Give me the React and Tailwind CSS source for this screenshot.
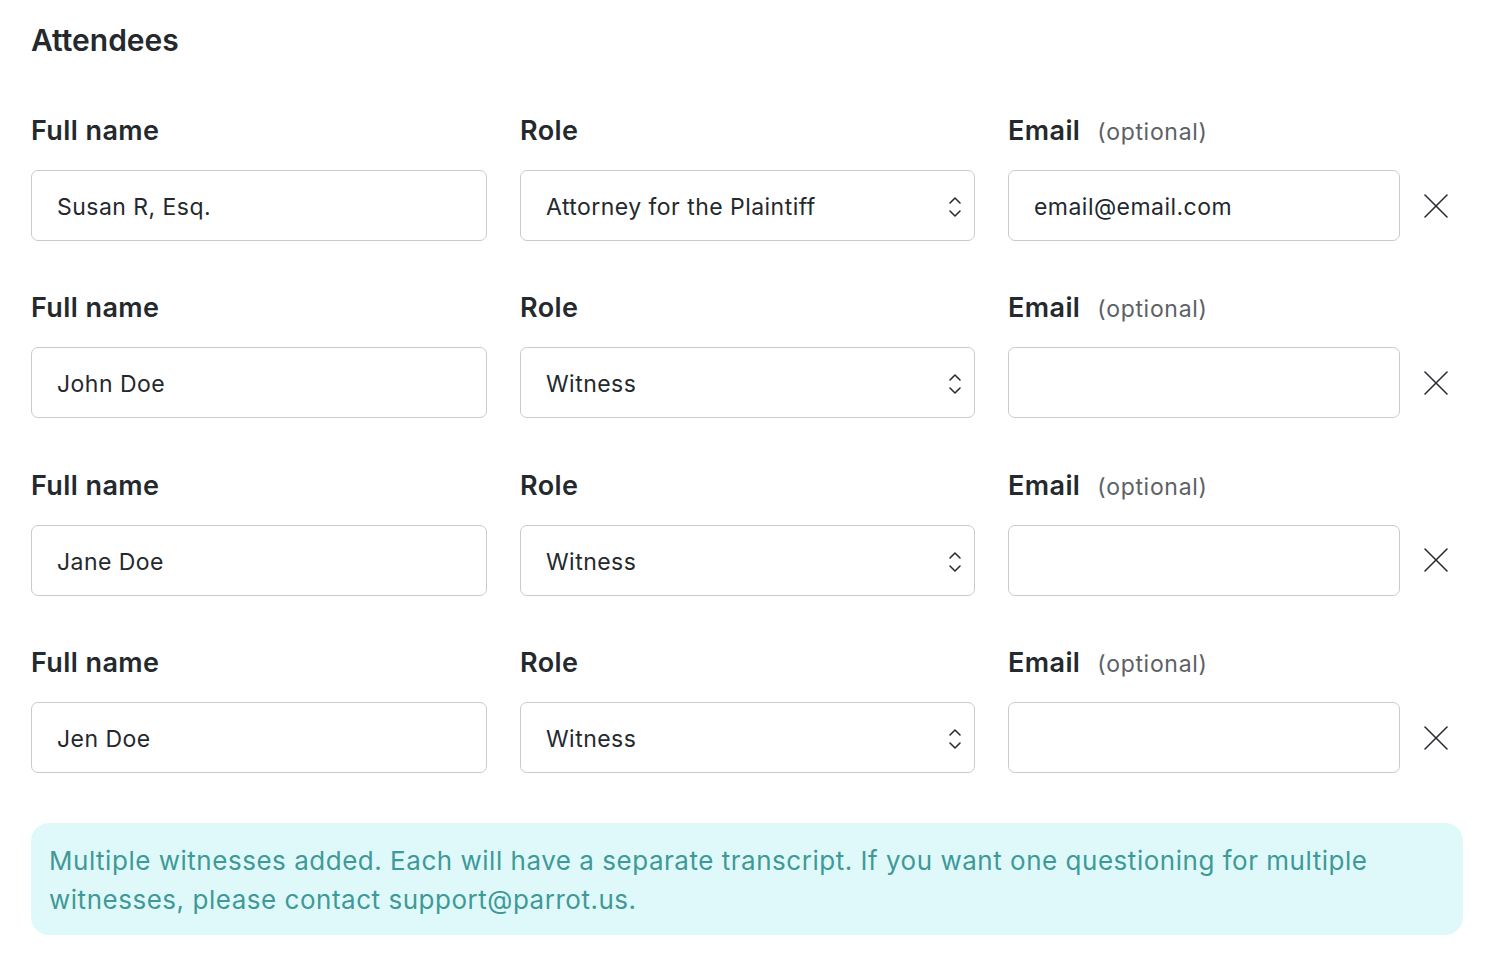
import React from 'react';

const attendees = [
    { name: 'Susan R, Esq.', role: 'Attorney for the Plaintiff', email: 'email@email.com' },
    { name: 'John Doe', role: 'Witness', email: '' },
    { name: 'Jane Doe', role: 'Witness', email: '' },
    { name: 'Jen Doe', role: 'Witness', email: '' },
];

function Chevrons() {
    return (
        <svg width="16" height="28" viewBox="0 0 16 28" fill="none" stroke="#2a2e33" strokeWidth="1.6" strokeLinecap="round" strokeLinejoin="round">
            <path d="M3 10 L8 5 L13 10" />
            <path d="M3 18 L8 23 L13 18" />
        </svg>
    );
}

function CloseIcon() {
    return (
        <svg width="28" height="28" viewBox="0 0 28 28" fill="none" stroke="#2a2e33" strokeWidth="1.6" strokeLinecap="round">
            <path d="M3 3 L25 25" />
            <path d="M25 3 L3 25" />
        </svg>
    );
}

const labelCls = 'text-[27px] leading-[32px] tracking-[0.015em] font-semibold text-[#24292e]';
const inputCls = 'mt-[23px] h-[71px] border border-[#c7cacf] rounded-[7px] flex items-center pt-[3px] text-[23px] tracking-[0.02em] text-[#24292e]';

function AttendeeRow({ attendee }) {
    return (
        <div className='flex items-end'>
            <div className='w-[456px]'>
                <div className={labelCls}>Full name</div>
                <div className={inputCls + ' px-[25px]'}>{attendee.name}</div>
            </div>
            <div className='w-[455px] ml-[33px]'>
                <div className={labelCls}>Role</div>
                <div className={inputCls + ' justify-between pl-[25px] pr-[11px]'}>
                    <span>{attendee.role}</span>
                    <Chevrons />
                </div>
            </div>
            <div className='w-[392px] ml-[33px]'>
                <div className='flex items-baseline h-[32px]'>
                    <span className={labelCls}>Email</span>
                    <span className='ml-[17px] text-[23px] leading-[32px] tracking-[0.03em] text-[#5d6166]'>(optional)</span>
                </div>
                <div className={inputCls + ' px-[25px]'}>{attendee.email}</div>
            </div>
            <div className='h-[71px] flex items-center ml-[22px]'>
                <CloseIcon />
            </div>
        </div>
    );
}

export default function App() {
    return (
        <div className='bg-white min-h-screen pt-[22px] pl-[31px] pr-[33px] font-["Inter","Noto_Sans",sans-serif]'>
            <h2 className='text-[30px] leading-[36px] font-semibold text-[#24292e]'>Attendees</h2>
            <div className='mt-[57px] flex flex-col gap-[51.4px]'>
                {attendees.map((a, i) => <AttendeeRow key={i} attendee={a} />)}
            </div>
            <div className='mt-[50px] bg-[#dff9fb] rounded-[18px] px-[18px] pt-[18px] pb-[16px] text-[26px] leading-[39px] tracking-[0.02em] text-[#3f9a97]'>
                Multiple witnesses added. Each will have a separate transcript. If you want one questioning for multiple witnesses, please contact support@parrot.us.
            </div>
        </div>
    );
}
